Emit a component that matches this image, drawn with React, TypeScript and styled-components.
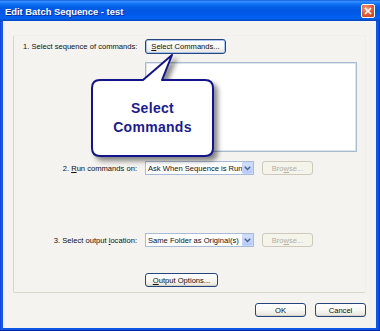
import React from 'react';
import styled, { createGlobalStyle } from 'styled-components';

const GlobalStyle = createGlobalStyle`
  html, body { margin: 0; padding: 0; background: #ffffff; }
  body { font-family: "Liberation Sans", Arial, sans-serif; }
`;

const FONT = `"Liberation Sans", Arial, sans-serif`;

const Window = styled.div`
  position: relative;
  width: 380px;
  height: 331px;
  display: flex;
  flex-direction: column;
  background: linear-gradient(to right, #0832c8 0, #1760ec 1px, #0b55e6 3px, #0b55e6 376px, #1454df 378px, #0830b8 380px);
  box-shadow: inset 0 -1px #0626a0;
  overflow: hidden;
`;

const TitleBar = styled.div`
  height: 21px;
  flex: 0 0 21px;
  display: flex;
  align-items: center;
  justify-content: space-between;
  padding: 1px 5px 0 5px;
  box-sizing: border-box;
  background: linear-gradient(
    to bottom,
    #0a56e0 0%,
    #3a8ffc 6%,
    #2384fb 12%,
    #0f70f4 20%,
    #0461e8 32%,
    #0058e2 50%,
    #0059e8 66%,
    #015ff0 80%,
    #0260ee 88%,
    #0152d4 95%,
    #0544b8 100%
  );
`;

const Title = styled.span`
  color: #ffffff;
  font: bold 9.4px ${FONT};
  text-shadow: 1px 1px 0 #0a2a9a;
  white-space: nowrap;
`;

const CloseButton = styled.div`
  width: 14px;
  height: 14px;
  box-sizing: border-box;
  border: 1px solid #ffffff;
  border-radius: 2px;
  background: radial-gradient(circle at 35% 30%, #f3a487 0%, #e2603b 45%, #c8421d 100%);
  display: flex;
  align-items: center;
  justify-content: center;
`;

const Body = styled.div`
  flex: 1;
  margin: 0 4px 3px 3px;
  background: #f4f3ef;
  padding: 14px 10px 0 10px;
  display: flex;
  flex-direction: column;
`;

const GroupBox = styled.div`
  height: 258px;
  box-sizing: border-box;
  border: 1px solid #d9d7cc;
  border-top-color: #f0efea;
  border-right-color: #f0efea;
  border-radius: 2px;
  padding: 3px 0 0 9px;
  display: flex;
  flex-direction: column;
`;

const Row = styled.div<{ $top?: number }>`
  display: grid;
  grid-template-columns: 114px auto;
  column-gap: 8px;
  align-items: center;
  margin-top: ${(p) => p.$top ?? 0}px;
`;

const Label = styled.span`
  text-align: right;
  font: 7.6px ${FONT};
  color: #111111;
  white-space: nowrap;
`;

const Controls = styled.div`
  display: flex;
  align-items: center;
  gap: 8px;
`;

const PushButton = styled.div<{ $w: number; $h?: number; $focus?: boolean }>`
  width: ${(p) => p.$w}px;
  height: ${(p) => p.$h ?? 14}px;
  box-sizing: border-box;
  border: 1px solid #23467c;
  border-radius: 3px;
  background: linear-gradient(#ffffff, #f6f6f2 55%, #e6e4dc);
  font: 7.6px ${FONT};
  color: #111111;
  box-shadow: ${(p) =>
    p.$focus ? 'inset 0 0 0 1px #a9c4ee' : 'inset 0 -1px 0 #d8d3c4'};
  display: flex;
  align-items: center;
  justify-content: center;
  white-space: nowrap;
`;

const DisabledButton = styled.div`
  width: 51px;
  height: 14px;
  box-sizing: border-box;
  border: 1px solid #cdcabb;
  border-radius: 3px;
  background: #f5f4ea;
  font: 7.6px ${FONT};
  color: #b3b0a2;
  display: flex;
  align-items: center;
  justify-content: center;
  white-space: nowrap;
`;

const ListBox = styled.div`
  width: 212px;
  height: 90px;
  box-sizing: border-box;
  border: 1px solid #a9bad1;
  box-shadow: inset 0 0 0 1px #dde4ee;
  background: #ffffff;
`;

const Select = styled.div`
  width: 109px;
  height: 14px;
  box-sizing: border-box;
  border: 1px solid #a7bad6;
  background: #ffffff;
  display: flex;
  align-items: center;
  padding-left: 2px;
`;

const SelectText = styled.span`
  flex: 1;
  overflow: hidden;
  white-space: nowrap;
  font: 7.6px ${FONT};
  color: #111111;
`;

const SelectArrow = styled.span`
  width: 11px;
  height: 12px;
  box-sizing: border-box;
  border: 1px solid #c6d6fb;
  border-radius: 1px;
  background: linear-gradient(#d4e1fd, #b3cbf7);
  display: flex;
  align-items: center;
  justify-content: center;
`;

const Footer = styled.div`
  display: flex;
  justify-content: flex-end;
  gap: 9px;
  margin-top: 10px;
`;

const Callout = styled.div`
  position: absolute;
  left: 85px;
  top: 50px;
  width: 140px;
  height: 115px;
  pointer-events: none;
`;

const CalloutShape = styled.svg`
  position: absolute;
  left: 0;
  top: 0;
  overflow: visible;
  filter: drop-shadow(4px 4px 2.5px rgba(0, 0, 0, 0.45));
`;

const CalloutText = styled.div`
  position: absolute;
  left: 7px;
  top: 30px;
  width: 121px;
  height: 76px;
  display: flex;
  flex-direction: column;
  align-items: center;
  justify-content: center;
  font: bold 14px ${FONT};
  letter-spacing: 0.3px;
  line-height: 19px;
  color: #1b1b8f;
  text-align: center;
`;

const U = styled.span`
  text-decoration: underline;
`;

const Chevron = () => (
  <svg width="7" height="5" viewBox="0 0 7 5">
    <path d="M0.8 0.8 L3.5 3.5 L6.2 0.8" fill="none" stroke="#4d6290" strokeWidth="1.5" />
  </svg>
);

export default function App() {
  return (
    <>
      <GlobalStyle />
      <Window>
        <TitleBar>
          <Title>Edit Batch Sequence - test</Title>
          <CloseButton>
            <svg width="8" height="8" viewBox="0 0 8 8">
              <path d="M1 1 L7 7 M7 1 L1 7" stroke="#ffffff" strokeWidth="1.6" />
            </svg>
          </CloseButton>
        </TitleBar>
        <Body>
          <GroupBox>
            <Row>
              <Label>1. Select sequence of commands:</Label>
              <PushButton $w={81} $h={15} $focus>
                <U>S</U>elect Commands...
              </PushButton>
            </Row>
            <Row $top={8}>
              <span />
              <ListBox />
            </Row>
            <Row $top={9}>
              <Label>
                2. <U>R</U>un commands on:
              </Label>
              <Controls>
                <Select>
                  <SelectText>Ask When Sequence is Run</SelectText>
                  <SelectArrow>
                    <Chevron />
                  </SelectArrow>
                </Select>
                <DisabledButton>
                  Bro<U>w</U>se...
                </DisabledButton>
              </Controls>
            </Row>
            <Row $top={58}>
              <Label>
                3. Select output <U>l</U>ocation:
              </Label>
              <Controls>
                <Select>
                  <SelectText>Same Folder as Original(s)</SelectText>
                  <SelectArrow>
                    <Chevron />
                  </SelectArrow>
                </Select>
                <DisabledButton>
                  Bro<U>w</U>se...
                </DisabledButton>
              </Controls>
            </Row>
            <Row $top={26}>
              <span />
              <PushButton $w={73}>
                <U>O</U>utput Options...
              </PushButton>
            </Row>
          </GroupBox>
          <Footer>
            <PushButton $w={51}>OK</PushButton>
            <PushButton $w={51}>Cancel</PushButton>
          </Footer>
        </Body>
        <Callout>
          <CalloutShape width="140" height="115" viewBox="0 0 140 115">
            <path
              d="M15 30 L58 30 L87 5 L77 30 L120 30 Q128 30 128 38 L128 98 Q128 106 120 106 L15 106 Q7 106 7 98 L7 38 Q7 30 15 30 Z"
              fill="#ffffff"
              stroke="#14148a"
              strokeWidth="2"
              strokeLinejoin="round"
            />
          </CalloutShape>
          <CalloutText>
            <span>Select</span>
            <span>Commands</span>
          </CalloutText>
        </Callout>
      </Window>
    </>
  );
}
